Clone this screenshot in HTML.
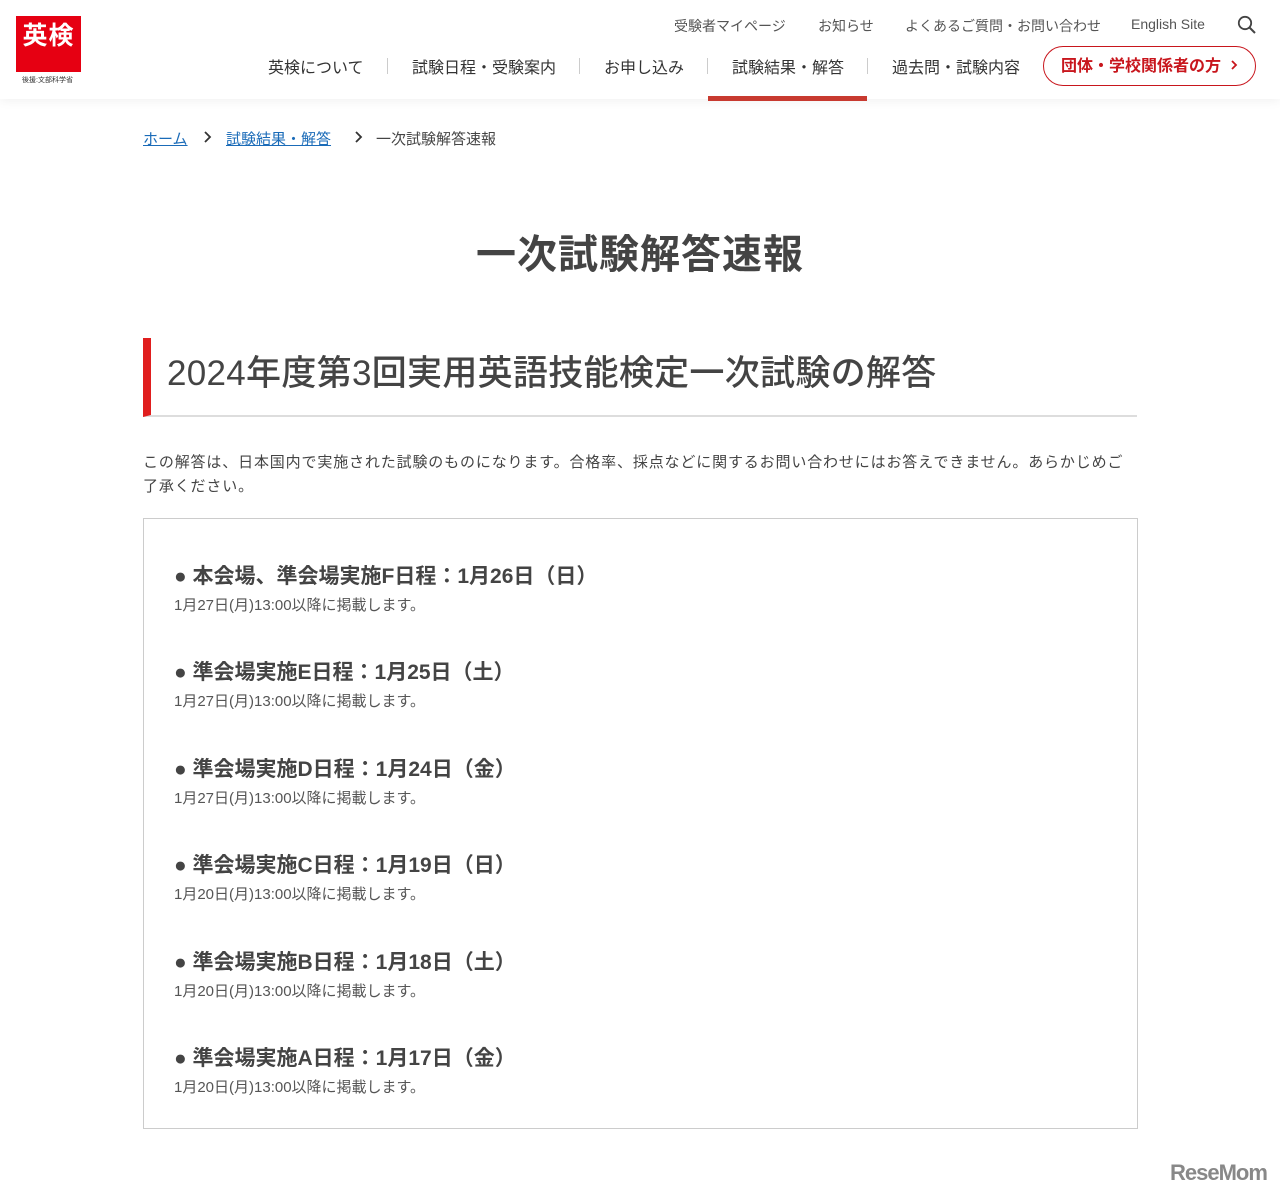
<!DOCTYPE html>
<html><head><meta charset="utf-8"><style>
*{margin:0;padding:0;box-sizing:border-box}
body{width:1280px;height:1197px;background:#fff;font-family:"Liberation Sans","Noto Sans CJK JP",sans-serif;color:#333;position:relative;overflow:hidden}
.hdr{position:absolute;left:0;top:0;width:1280px;height:99px;background:#fff;box-shadow:0 2px 10px rgba(0,0,0,.06)}
.logo{position:absolute;left:16px;top:16px;width:65px;height:56px;background:#e60012;color:#fff;font-weight:bold;font-size:25px;text-align:center;line-height:40px;letter-spacing:1px}
.logosub{position:absolute;left:22px;top:75px;font-size:7px;color:#333}
.top{position:absolute;top:16px;font-size:14px;color:#555}
.nav{position:absolute;top:54px;font-size:16px;color:#333}
.sep{position:absolute;top:58px;width:1px;height:16px;background:#ccc}
.btn{position:absolute;left:1043px;top:46px;width:213px;height:40px;border:1.5px solid #c8161d;border-radius:20px;color:#c8161d;font-weight:bold;font-size:16px;line-height:39px;padding-left:17px}
.ul{position:absolute;left:708px;top:96px;width:159px;height:5px;background:#c83a30}
.bc{position:absolute;top:128px;font-size:15px}
.bc a{color:#1a6bb8;text-decoration:underline}
.chev{position:absolute;top:129px}
h1{position:absolute;left:0;width:1280px;top:222px;text-align:center;font-size:40px;font-weight:bold;color:#444;letter-spacing:1px}
.h2{position:absolute;left:143px;top:338px;width:994px;height:79px;border-left:8px solid #e01e1e;border-bottom:2px solid #ddd;font-size:35px;color:#444;padding-left:16px;line-height:72px;font-weight:500;letter-spacing:0.3px}
.p{position:absolute;left:143px;top:451px;width:994px;font-size:15px;line-height:24px;color:#444;letter-spacing:0.85px}
.box{position:absolute;left:143px;top:518px;width:995px;height:611px;border:1.5px solid #ccc}
.it{position:absolute;left:30px}
.it b{display:block;font-size:21px;color:#444;height:30px;line-height:30px}
.it span{display:block;font-size:15px;color:#555;margin-top:2px}
.rm{position:absolute;left:1170px;top:1160px;font-size:22px;font-weight:bold;color:#888;letter-spacing:-1px}
</style></head><body>
<div class="hdr">
<div class="logo">英検</div><div class="logosub">後援:文部科学省</div>
<div class="top" style="left:674px">受験者マイページ</div>
<div class="top" style="left:818px">お知らせ</div>
<div class="top" style="left:905px">よくあるご質問・お問い合わせ</div>
<div class="top" style="left:1131px">English Site</div>
<svg style="position:absolute;left:1237px;top:15px" width="20" height="20" viewBox="0 0 20 20"><circle cx="8" cy="8" r="6.2" fill="none" stroke="#444" stroke-width="1.8"/><path d="M12.5 12.5 18 18" stroke="#444" stroke-width="2"/></svg>
<div class="nav" style="left:268px">英検について</div>
<div class="sep" style="left:387px"></div>
<div class="nav" style="left:412px">試験日程・受験案内</div>
<div class="sep" style="left:579px"></div>
<div class="nav" style="left:604px">お申し込み</div>
<div class="sep" style="left:707px"></div>
<div class="nav" style="left:732px">試験結果・解答</div>
<div class="sep" style="left:867px"></div>
<div class="nav" style="left:892px">過去問・試験内容</div>
<div class="btn">団体・学校関係者の方 <svg width="10" height="12" viewBox="0 0 10 12" style="margin-left:4px"><path d="M3 2l4 4-4 4" fill="none" stroke="#c8161d" stroke-width="1.8"/></svg></div>
</div>
<div class="ul"></div>
<div class="bc" style="left:143px"><a>ホーム</a></div>
<svg class="chev" style="left:203px" width="10" height="16" viewBox="0 0 10 16"><path d="M2 3l5 5-5 5" fill="none" stroke="#333" stroke-width="1.8"/></svg>
<div class="bc" style="left:226px"><a>試験結果・解答</a></div>
<svg class="chev" style="left:354px" width="10" height="16" viewBox="0 0 10 16"><path d="M2 3l5 5-5 5" fill="none" stroke="#333" stroke-width="1.8"/></svg>
<div class="bc" style="left:376px;color:#444">一次試験解答速報</div>
<h1>一次試験解答速報</h1>
<div class="h2">2024年度第3回実用英語技能検定一次試験の解答</div>
<div class="p">この解答は、日本国内で実施された試験のものになります。合格率、採点などに関するお問い合わせにはお答えできません。あらかじめご<br>了承ください。</div>
<div class="box">
<div class="it" style="top:43px"><b>● 本会場、準会場実施F日程：1月26日（日）</b><span>1月27日(月)13:00以降に掲載します。</span></div>
<div class="it" style="top:139px"><b>● 準会場実施E日程：1月25日（土）</b><span>1月27日(月)13:00以降に掲載します。</span></div>
<div class="it" style="top:236px"><b>● 準会場実施D日程：1月24日（金）</b><span>1月27日(月)13:00以降に掲載します。</span></div>
<div class="it" style="top:332px"><b>● 準会場実施C日程：1月19日（日）</b><span>1月20日(月)13:00以降に掲載します。</span></div>
<div class="it" style="top:429px"><b>● 準会場実施B日程：1月18日（土）</b><span>1月20日(月)13:00以降に掲載します。</span></div>
<div class="it" style="top:525px"><b>● 準会場実施A日程：1月17日（金）</b><span>1月20日(月)13:00以降に掲載します。</span></div>
</div>
<div class="rm">ReseMom</div>
</body></html>
